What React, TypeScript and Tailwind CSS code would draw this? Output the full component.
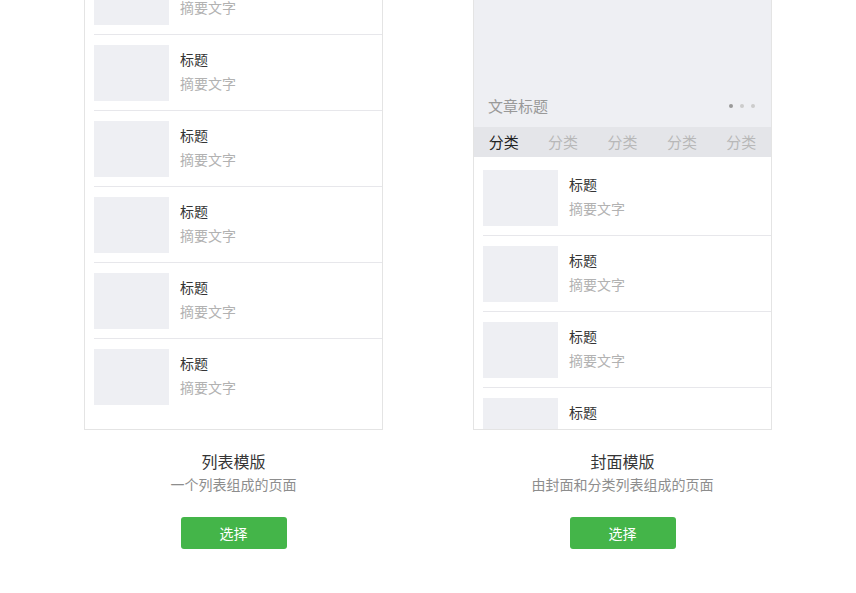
import React from 'react';

const font = { fontFamily: '"Noto Sans CJK SC", "Noto Sans", sans-serif' };

function Row({ last = false, first = false }: { last?: boolean; first?: boolean }) {
  return (
    <div
      className={`ml-[9px] flex pb-[9px] ${first ? 'pt-[13px]' : 'pt-[10px]'} ${
        last ? '' : 'border-b border-[#e7e7eb]'
      }`}
    >
      <div className="h-[56px] w-[75px] shrink-0 bg-[#eeeff3]" />
      <div className="ml-[11px] pt-[4px]">
        <div className="text-[14px] leading-[20px] text-[#353535]">标题</div>
        <div className="mt-[4px] text-[14px] leading-[20px] text-[#b2b2b2]">摘要文字</div>
      </div>
    </div>
  );
}

function Template({
  title,
  desc,
  children,
}: {
  title: string;
  desc: string;
  children: React.ReactNode;
}) {
  return (
    <div className="flex w-[299px] flex-col items-center">
      <div className="h-[480px] w-full overflow-hidden border border-[#e4e4e4] bg-white">
        {children}
      </div>
      <div className="mt-[19px] text-[16px] leading-[24px] text-[#353535]">{title}</div>
      <div className="text-[14px] leading-[22px] text-[#8d8d8d]">{desc}</div>
      <button className="mt-[22px] h-[32px] w-[106px] rounded-[3px] bg-[#44b549] text-[14px] leading-[30px] text-white">
        选择
      </button>
    </div>
  );
}

export default function App() {
  const tabs = ['分类', '分类', '分类', '分类', '分类'];

  return (
    <div className="h-[593px] w-full overflow-hidden bg-white" style={font}>
      <div className="-mt-[50px] flex justify-center gap-[90px]">
        {/* list template */}
        <Template title="列表模版" desc="一个列表组成的页面">
          <div className="pt-[8px]">
            {[0, 1, 2, 3, 4, 5].map(i => (
              <Row key={i} last={i === 5} />
            ))}
          </div>
        </Template>

        {/* cover template */}
        <Template title="封面模版" desc="由封面和分类列表组成的页面">
          <div className="flex h-[176px] items-end justify-between bg-[#eeeff3] pb-[11px] pl-[14px] pr-[16px]">
            <span className="text-[15px] leading-[20px] text-[#999999]">文章标题</span>
            <div className="mb-[8px] flex gap-[7px]">
              <span className="h-[4px] w-[4px] rounded-full bg-[#999999]" />
              <span className="h-[4px] w-[4px] rounded-full bg-[#cccccc]" />
              <span className="h-[4px] w-[4px] rounded-full bg-[#cccccc]" />
            </div>
          </div>
          <div className="flex h-[30px] items-center bg-[#e4e5e9]">
            {tabs.map((t, i) => (
              <div
                key={i}
                className={`flex-1 text-center text-[15px] leading-[30px] ${
                  i === 0 ? 'text-[#222222]' : 'text-[#b8b8b8]'
                }`}
              >
                {t}
              </div>
            ))}
          </div>
          <div>
            <Row first />
            <Row />
            <Row />
            <Row last />
          </div>
        </Template>
      </div>
    </div>
  );
}
